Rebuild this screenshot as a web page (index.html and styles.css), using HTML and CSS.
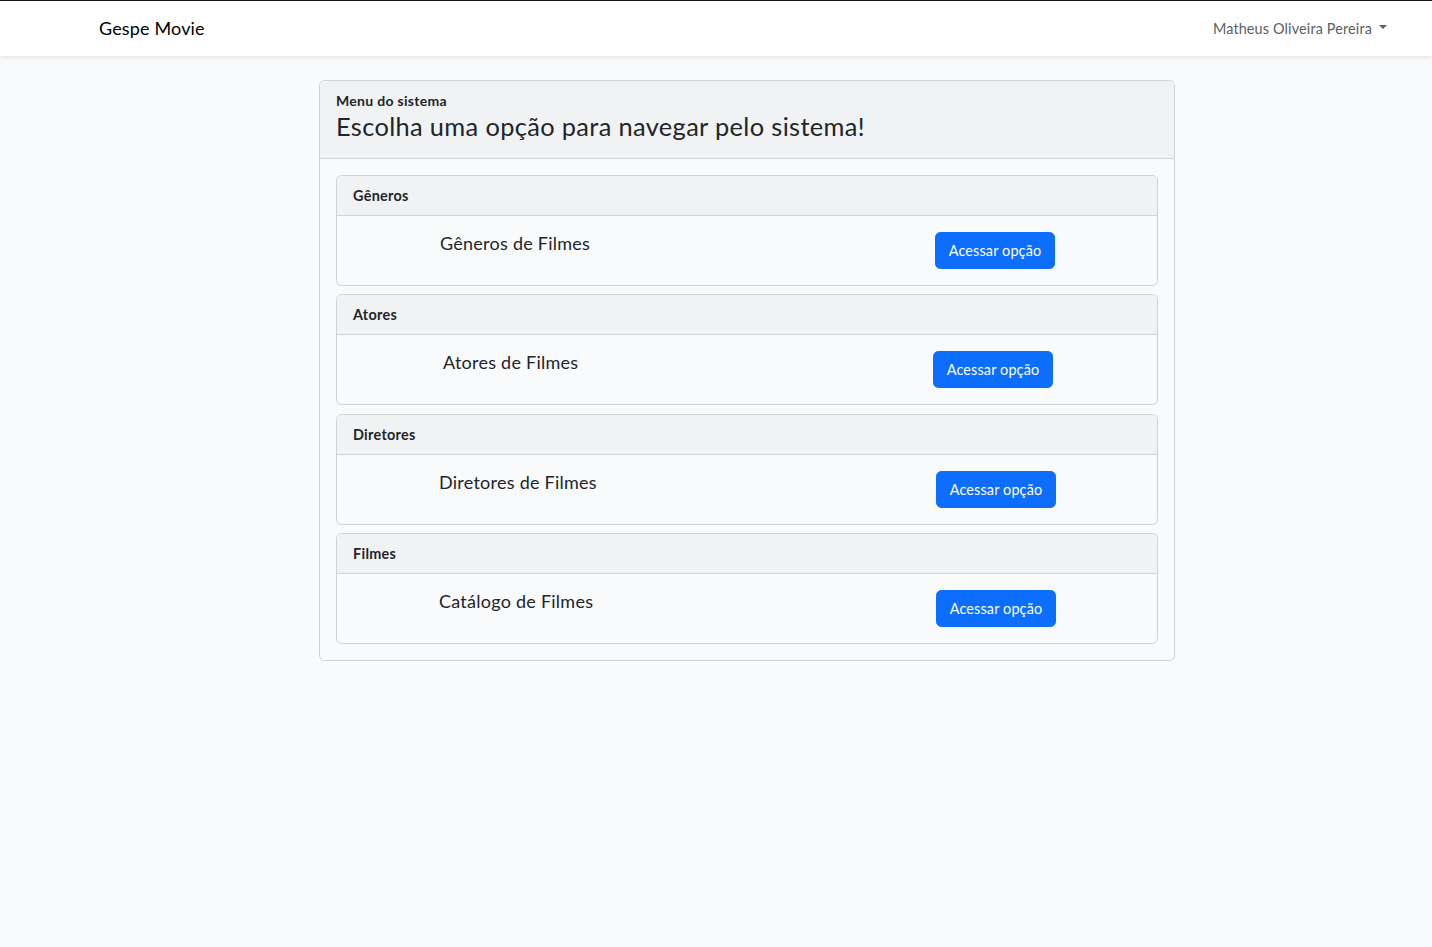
FILE: index.html
```html
<!DOCTYPE html>
<html lang="pt-BR">
<head>
<meta charset="utf-8">
<title>Gespe Movie</title>
<link rel="stylesheet" href="styles.css">
</head>
<body>
<nav class="navbar">
  <a class="brand" href="#">Gespe Movie</a>
  <a class="user" href="#">Matheus Oliveira Pereira <span class="caret"></span></a>
</nav>
<main class="main">
  <section class="card outer">
    <header class="card-header outer-header">
      <div class="subtitle">Menu do sistema</div>
      <h3 class="title">Escolha uma opção para navegar pelo sistema!</h3>
    </header>
    <div class="outer-body">
      <div class="card item">
        <div class="card-header item-header">Gêneros</div>
        <div class="item-body">
          <h5 class="item-text t1">Gêneros de Filmes</h5>
          <a class="btn b1" href="#">Acessar opção</a>
        </div>
      </div>
      <div class="card item">
        <div class="card-header item-header">Atores</div>
        <div class="item-body">
          <h5 class="item-text t2">Atores de Filmes</h5>
          <a class="btn b2" href="#">Acessar opção</a>
        </div>
      </div>
      <div class="card item">
        <div class="card-header item-header">Diretores</div>
        <div class="item-body">
          <h5 class="item-text t3">Diretores de Filmes</h5>
          <a class="btn b3" href="#">Acessar opção</a>
        </div>
      </div>
      <div class="card item last">
        <div class="card-header item-header">Filmes</div>
        <div class="item-body">
          <h5 class="item-text t3">Catálogo de Filmes</h5>
          <a class="btn b3" href="#">Acessar opção</a>
        </div>
      </div>
    </div>
  </section>
</main>
</body>
</html>
```
FILE: styles.css
```css
* { box-sizing: border-box; }
html, body { margin: 0; padding: 0; }
body {
  font-family: "Lato", "Noto Sans", sans-serif;
  font-size: 14.4px;
  line-height: 1.6;
  color: #212529;
  background: #f8fafc;
  min-height: 947px;
  letter-spacing: 0.15px;
}
a { text-decoration: none; }
.navbar {
  height: 56px;
  background: #fff;
  border-top: 1px solid #111;
  box-shadow: 0 2px 4px rgba(0,0,0,.075);
  display: flex;
  align-items: center;
  justify-content: space-between;
  padding: 0 45px 0 99px;
}
.brand {
  font-size: 18px;
  color: #000;
  line-height: 1.6;
}
.user {
  color: #5c5f62;
  font-size: 14.4px;
  display: flex;
  align-items: center;
}
.caret {
  display: inline-block;
  margin-left: 7px;
  width: 0; height: 0;
  border-left: 4.3px solid transparent;
  border-right: 4.3px solid transparent;
  border-top: 4.3px solid #5c5f62;
  margin-top: -2px;
}
.main {
  padding: 24px 0 0 319px;
}
.card {
  border: 1px solid #d0d2d4;
  border-radius: 5.4px;
  background: #f8fafc;
  overflow: hidden;
}
.outer { width: 856px; }
.card-header {
  background: #f1f2f4;
  border-bottom: 1px solid #d0d2d4;
}
.outer-header {
  padding: 9px 16px 17px;
}
.subtitle {
  font-size: 14px;
  font-weight: 700;
  line-height: 22px;
  letter-spacing: 0.3px;
}
.title {
  margin: 0;
  font-size: 25.4px;
  font-weight: 400;
  line-height: 29px;
  letter-spacing: 0.35px;
}
.outer-body {
  padding: 16px 16px 16px;
  display: flex;
  flex-direction: column;
  gap: 8.3px;
}
.item-header {
  padding: 8px 16px;
  font-weight: 700;
  font-size: 14.4px;
  line-height: 23px;
  letter-spacing: 0.3px;
}
.item-body {
  display: flex;
  align-items: flex-start;
  padding: 16px 16px 16px 0;
  height: 69px;
}
.item-text {
  margin: 0;
  font-size: 18px;
  font-weight: 400;
  line-height: 1.2;
  width: 598px;
  padding-top: 1px;
  letter-spacing: 0.25px;
}
.t1 { padding-left: 103px; }
.t2 { padding-left: 106px; }
.t3 { padding-left: 102px; }
.btn {
  display: inline-block;
  background: #0d6efd;
  color: #fff;
  border: 1px solid #0d6efd;
  border-radius: 5.4px;
  padding: 6px 12px;
  font-size: 14.4px;
  line-height: 23px;
  width: 120px;
  text-align: center;
}
.b1 { margin-left: 0; }
.b2 { margin-left: -2px; }
.b3 { margin-left: 1px; }
```
